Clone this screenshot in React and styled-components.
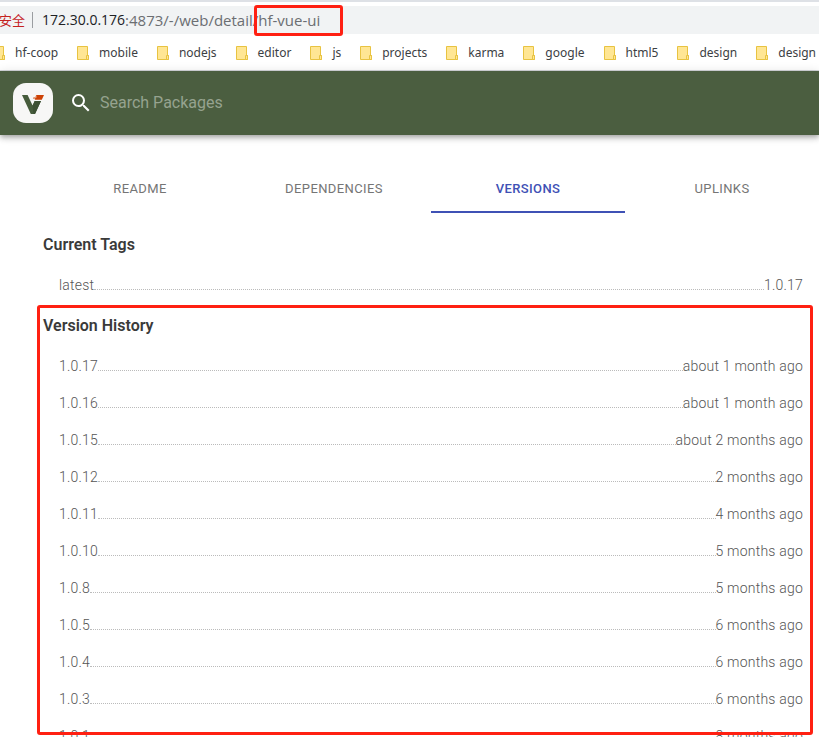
import React from "react";
import styled, { createGlobalStyle } from "styled-components";

const GlobalStyle = createGlobalStyle`
  * { box-sizing: border-box; }
  body { margin: 0; background: #fff; font-family: Roboto, "Liberation Sans", sans-serif; }
`;

const Page = styled.div`
  height: 100vh;
  overflow: hidden;
  display: flex;
  flex-direction: column;
`;

const BrowserBar = styled.div`
  flex: none;
  border-top: 2px solid #dee1e6;
  border-bottom: 1px solid #d5d8dc;
  padding-top: 4px;
  background: #fff;
  overflow: hidden;
`;

const AddressBar = styled.div`
  display: flex;
  align-items: center;
  height: 28px;
  background: #f1f3f4;
  font: 15px/20px "Open Sans", "Noto Sans CJK SC", sans-serif;
  color: #6b6e72;
  white-space: nowrap;
`;

const Warning = styled.span`
  font-family: "Noto Sans CJK SC", sans-serif;
  font-size: 13px;
  color: #c5221f;
  margin-left: -1px;
`;

const Divider = styled.span`
  width: 1px;
  height: 16px;
  background: #9a9da1;
  margin: 0 9px 0 7px;
`;

const Host = styled.span`
  font-size: 14px;
  color: #202124;
`;

const PackageName = styled.span`
  position: relative;
`;

const UrlMark = styled.span`
  position: absolute;
  inset: -5px -23px -6px -4px;
  border: 3px solid #ff2012;
  border-radius: 3px;
`;

const Bookmarks = styled.nav`
  display: flex;
  align-items: center;
  gap: 19px;
  height: 36px;
  margin-left: -7px;
  padding-top: 1px;
`;

const Bookmark = styled.a`
  flex: none;
  display: flex;
  align-items: center;
  gap: 10px;
  font: 12px/18px "Noto Sans", sans-serif;
  color: #3c4043;
  text-decoration: none;
`;

const Header = styled.header`
  flex: none;
  display: flex;
  align-items: center;
  height: 64px;
  padding: 0 13px;
  background: #4b5e40;
  box-shadow: 0 2px 4px -1px rgba(0, 0, 0, 0.2), 0 4px 5px rgba(0, 0, 0, 0.14), 0 1px 10px rgba(0, 0, 0, 0.12);
`;

const Logo = styled.a`
  display: block;
  width: 40px;
  height: 40px;
  margin-right: 16px;
`;

const Search = styled.label`
  flex: 1;
  display: flex;
  align-items: center;
  gap: 7px;
`;

const SearchInput = styled.input`
  flex: 1;
  min-width: 0;
  padding: 0;
  border: 0;
  outline: 0;
  background: transparent;
  color: #fff;
  font: 16px/20px Roboto, sans-serif;
  &::placeholder { color: #96a38f; opacity: 1; }
`;

const Main = styled.main`
  padding: 29px 0 0 43px;
`;

const Tabs = styled.div`
  display: grid;
  grid-template-columns: repeat(4, 1fr);
`;

const Tab = styled.button`
  height: 49px;
  padding: 2px 0 0;
  border: 0;
  border-bottom: 2px solid ${(p) => (p.$active ? "#3f51b5" : "transparent")};
  background: none;
  color: ${(p) => (p.$active ? "#3f51b5" : "#757575")};
  font: ${(p) => (p.$active ? 500 : 400)} 13px/20px Roboto, sans-serif;
  letter-spacing: 0.03em;
`;

const Section = styled.section`
  position: relative;
  padding-top: ${(p) => p.$top}px;
`;

const Heading = styled.h2`
  margin: 0;
  font-size: 16px;
  line-height: 24px;
  font-weight: 600;
  color: #3a3a3a;
`;

const List = styled.ul`
  margin: 0;
  padding: 10px 16px 0;
  list-style: none;
`;

const Row = styled.li`
  display: flex;
  align-items: center;
  height: 37px;
  font-size: 14px;
  line-height: 21px;
  font-weight: 300;
  letter-spacing: 0.015em;
  color: #555;
  white-space: nowrap;
`;

const Leader = styled.span`
  flex: 1;
  height: 9px;
  border-bottom: 1px dotted #bbb;
`;

const HistoryMark = styled.div`
  position: absolute;
  inset: 1px 6px 20px -6px;
  border: 3px solid #ff2012;
  border-radius: 3px;
  pointer-events: none;
`;

const bookmarks = ["hf-coop", "mobile", "nodejs", "editor", "js", "projects", "karma", "google", "html5", "design", "design"];

const history = [
  ["1.0.17", "about 1 month ago"],
  ["1.0.16", "about 1 month ago"],
  ["1.0.15", "about 2 months ago"],
  ["1.0.12", "2 months ago"],
  ["1.0.11", "4 months ago"],
  ["1.0.10", "5 months ago"],
  ["1.0.8", "5 months ago"],
  ["1.0.5", "6 months ago"],
  ["1.0.4", "6 months ago"],
  ["1.0.3", "6 months ago"],
  ["1.0.1", "8 months ago"],
];

const tabs = ["README", "DEPENDENCIES", "VERSIONS", "UPLINKS"];

function FolderIcon() {
  return (
    <svg width="12" height="14" viewBox="0 0 12 14" aria-hidden="true">
      <path d="M.5.5h10v9h1v4H.5z" fill="#ffe694" stroke="#e8c341" />
      <path d="M9.5 13V9.5h2v4h-2z" fill="#ffe694" stroke="#e8c341" />
    </svg>
  );
}

function LogoMark() {
  return (
    <svg width="40" height="40" viewBox="0 0 40 40" aria-hidden="true">
      <rect width="40" height="40" rx="13" fill="#f7f7f6" />
      <path d="M9 12h5.6l5 10.6 2.1-4.6H28l-6 13h-4.2z" fill="#465c3c" />
      <path d="M19.6 22.6l2.1-4.6H28l-6 13h-1.6z" fill="#3d5134" />
      <path d="M23.6 12H31l-2.2 4.8h-7.1l.6-1.3h-2.4l.5-1h2.9l.4-1h-1.5z" fill="#cd4205" />
    </svg>
  );
}

function SearchIcon() {
  return (
    <svg width="24" height="24" viewBox="0 0 24 24" fill="#fff" aria-hidden="true">
      <path d="M15.5 14h-.79l-.28-.27A6.47 6.47 0 0 0 16 9.5 6.5 6.5 0 1 0 9.5 16c1.61 0 3.09-.59 4.23-1.57l.27.28v.79l5 4.99L20.49 19l-4.99-5zm-6 0C7.01 14 5 11.99 5 9.5S7.01 5 9.5 5 14 7.01 14 9.5 11.99 14 9.5 14z" />
    </svg>
  );
}

function VersionRow({ name, value }) {
  return (
    <Row>
      <span>{name}</span>
      <Leader />
      <span>{value}</span>
    </Row>
  );
}

export default function App() {
  return (
    <Page>
      <GlobalStyle />
      <BrowserBar>
        <AddressBar>
          <Warning>安全</Warning>
          <Divider />
          <Host>172.30.0.176</Host>
          <span>:4873/-/web/detail/</span>
          <PackageName>
            hf-vue-ui
            <UrlMark />
          </PackageName>
        </AddressBar>
        <Bookmarks aria-label="Bookmarks">
          {bookmarks.map((name, i) => (
            <Bookmark href="#" key={i}>
              <FolderIcon />
              {name}
            </Bookmark>
          ))}
        </Bookmarks>
      </BrowserBar>
      <Header>
        <Logo href="#" aria-label="Verdaccio">
          <LogoMark />
        </Logo>
        <Search>
          <SearchIcon />
          <SearchInput type="text" placeholder="Search Packages" aria-label="Search Packages" />
        </Search>
      </Header>
      <Main>
        <Tabs role="tablist">
          {tabs.map((name) => (
            <Tab key={name} type="button" role="tab" aria-selected={name === "VERSIONS"} $active={name === "VERSIONS"}>
              {name}
            </Tab>
          ))}
        </Tabs>
        <Section $top={20}>
          <Heading>Current Tags</Heading>
          <List>
            <VersionRow name="latest" value="1.0.17" />
          </List>
        </Section>
        <Section $top={10}>
          <Heading>Version History</Heading>
          <List>
            {history.map(([name, value]) => (
              <VersionRow key={name} name={name} value={value} />
            ))}
          </List>
          <HistoryMark />
        </Section>
      </Main>
    </Page>
  );
}
